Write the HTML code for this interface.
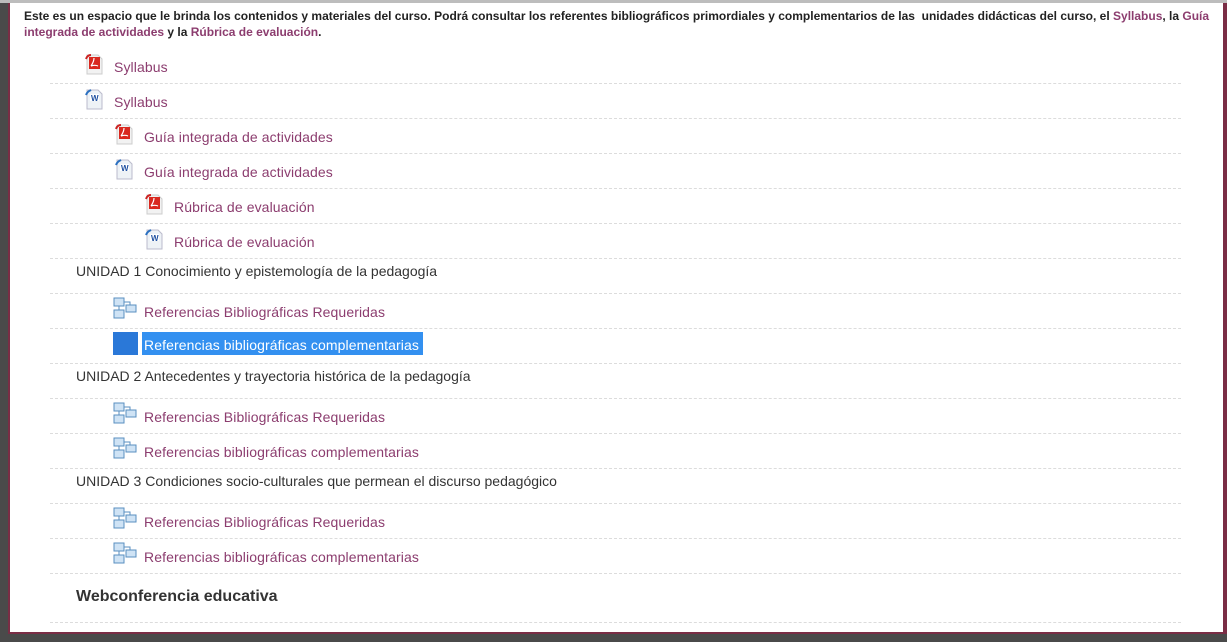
<!DOCTYPE html>
<html><head><meta charset="utf-8"><style>
*{margin:0;padding:0;box-sizing:border-box}
body{width:1227px;height:642px;overflow:hidden;background:#4a4a4a;font-family:"Liberation Sans",Arial,sans-serif;position:relative}
#top{position:absolute;left:0;top:0;width:1227px;height:3px;background:#bdbdbd}
#panel{position:absolute;left:8px;top:3px;width:1219px;height:631px;background:#fff;border-left:2px solid #7a2d45;border-right:4px solid #7a2d45;border-bottom:2px solid #7a2d45}
.intro{position:absolute;left:24px;top:8px;width:1200px;font-size:12px;font-weight:bold;color:#222;line-height:16px}
.intro a{color:#8c3d6f;text-decoration:none}
.ln{position:absolute;left:50px;width:1131px;border-top:1px dashed #dcdcdc;height:0}
.it{position:absolute;font-size:14px;color:#8c3d6f;white-space:nowrap;line-height:17px;letter-spacing:0.1px}
.un{position:absolute;left:76px;font-size:14px;color:#333;white-space:nowrap}
.ic{position:absolute;width:20px;height:22px}
.sel{background:#3390f0;color:#fff;padding:2px 2px;}
</style></head><body>
<div id="top"></div>
<div id="panel"></div>
<div class="intro">Este es un espacio que le brinda los contenidos y materiales del curso. Podrá consultar los referentes bibliográficos primordiales y complementarios de las&nbsp; unidades didácticas del curso, el <a>Syllabus</a>, la <a>Guía integrada de actividades</a> y la <a>Rúbrica de evaluación</a>.</div>

<svg width="0" height="0" style="position:absolute"><defs>
<g id="pdf"><path d="M3 2h11l4 4v15H3z" fill="#f2f2f2" stroke="#ccc"/><rect x="5" y="4" width="11" height="12" fill="#d9281f"/><path d="M7 13c2-3 3-6 3-8M7 13c3-1 5-1 7 0" stroke="#fff" stroke-width="1.2" fill="none"/><path d="M2 6c1-3 3-4 5-4" stroke="#c22" stroke-width="2" fill="none"/></g>
<g id="doc"><path d="M3 2h11l4 4v15H3z" fill="#eef2f6" stroke="#bbc"/><rect x="6" y="6" width="9" height="7" fill="#fff"/><text x="7" y="13" font-size="8" font-weight="bold" fill="#1e4fa0" font-family="Liberation Sans">W</text><path d="M2 7c1-3 3-4 5-5" stroke="#2a6fc0" stroke-width="2" fill="none"/></g>
<g id="fol"><rect x="1" y="1" width="10" height="8" fill="#cfe3f5" stroke="#5a8fc0"/><rect x="1" y="13" width="10" height="8" fill="#cfe3f5" stroke="#5a8fc0"/><rect x="13" y="8" width="10" height="7" fill="#cfe3f5" stroke="#5a8fc0"/><path d="M6 9v4M11 5h6v3" stroke="#5a8fc0" fill="none"/></g>
</defs></svg>

<div class="ln" style="top:83px"></div><div class="ln" style="top:118px"></div><div class="ln" style="top:153px"></div><div class="ln" style="top:188px"></div><div class="ln" style="top:223px"></div><div class="ln" style="top:258px"></div><div class="ln" style="top:293px"></div><div class="ln" style="top:328px"></div><div class="ln" style="top:363px"></div><div class="ln" style="top:398px"></div><div class="ln" style="top:433px"></div><div class="ln" style="top:468px"></div><div class="ln" style="top:503px"></div><div class="ln" style="top:538px"></div><div class="ln" style="top:573px"></div><div class="ln" style="top:622px"></div>

<svg class="ic" style="left:84px;top:53px"><use href="#pdf"/></svg><div class="it" style="left:114px;top:59px">Syllabus</div>
<svg class="ic" style="left:84px;top:88px"><use href="#doc"/></svg><div class="it" style="left:114px;top:94px">Syllabus</div>
<svg class="ic" style="left:114px;top:123px"><use href="#pdf"/></svg><div class="it" style="left:144px;top:129px">Guía integrada de actividades</div>
<svg class="ic" style="left:114px;top:158px"><use href="#doc"/></svg><div class="it" style="left:144px;top:164px">Guía integrada de actividades</div>
<svg class="ic" style="left:144px;top:193px"><use href="#pdf"/></svg><div class="it" style="left:174px;top:199px">Rúbrica de evaluación</div>
<svg class="ic" style="left:144px;top:228px"><use href="#doc"/></svg><div class="it" style="left:174px;top:234px">Rúbrica de evaluación</div>

<div class="un" style="top:263px">UNIDAD 1 Conocimiento y epistemología de la pedagogía</div>
<svg class="ic" style="left:113px;top:297px;width:25px"><use href="#fol"/></svg><div class="it" style="left:144px;top:304px">Referencias Bibliográficas Requeridas</div>
<div style="position:absolute;left:113px;top:332px;width:25px;height:23px;background:#2a78d8"></div><div class="it sel" style="left:142px;top:332px;height:23px;padding-top:5px;width:281px">Referencias bibliográficas complementarias</div>

<div class="un" style="top:368px">UNIDAD 2 Antecedentes y trayectoria histórica de la pedagogía</div>
<svg class="ic" style="left:113px;top:402px;width:25px"><use href="#fol"/></svg><div class="it" style="left:144px;top:409px">Referencias Bibliográficas Requeridas</div>
<svg class="ic" style="left:113px;top:437px;width:25px"><use href="#fol"/></svg><div class="it" style="left:144px;top:444px">Referencias bibliográficas complementarias</div>

<div class="un" style="top:473px">UNIDAD 3 Condiciones socio-culturales que permean el discurso pedagógico</div>
<svg class="ic" style="left:113px;top:507px;width:25px"><use href="#fol"/></svg><div class="it" style="left:144px;top:514px">Referencias Bibliográficas Requeridas</div>
<svg class="ic" style="left:113px;top:542px;width:25px"><use href="#fol"/></svg><div class="it" style="left:144px;top:549px">Referencias bibliográficas complementarias</div>

<div class="un" style="top:588px;font-size:16px;font-weight:bold;color:#333">Webconferencia educativa</div>
</body></html>
